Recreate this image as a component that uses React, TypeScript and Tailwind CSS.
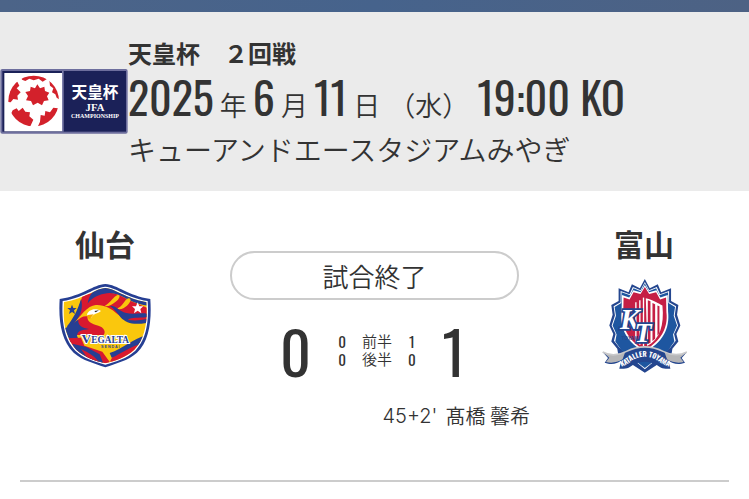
interface Team {
  name: string;
  score: number;
  halves: [number, number];
}

const home: Team = { name: "仙台", score: 0, halves: [0, 0] };
const away: Team = { name: "富山", score: 1, halves: [1, 0] };

function CupLogo() {
  return (
    <svg viewBox="0 28 384 194" className="w-32 shrink-0" role="img" aria-label="天皇杯 JFA">
      <defs>
        <clipPath id="cup-ball">
          <circle cx="101" cy="124" r="76" />
        </clipPath>
      </defs>
      <rect x="1" y="28" width="382" height="194" rx="6" fill="#6d6e9d" />
      <rect x="7" y="34" width="371" height="182" fill="#1b2158" />
      <rect x="13" y="40" width="173" height="175" fill="#fff" />
      <rect x="186" y="34" width="5" height="182" fill="#7c7eaa" />
      <g clipPath="url(#cup-ball)" fill="#d3212b">
        <path d="M112 74 L120 86 L133 81 L135 94 L148 99 L141 110 L146 122 L132 124 L126 137 L113 129 L99 137 L93 124 L78 122 L84 109 L76 97 L90 94 L92 81 L105 86 Z" />
        <path d="M60 44 L140 44 L142 57 L128 66 L116 57 L101 62 L88 57 L76 64 L66 60 Z" />
        <path d="M20 70 L52 66 L58 78 L50 86 L62 98 L52 108 L54 120 L40 118 L32 128 L20 126 Z" />
        <path d="M148 62 L182 90 L182 122 L170 114 L166 104 L156 98 L160 86 L150 78 Z" />
        <path d="M38 152 L50 146 L56 154 L68 144 L76 156 L90 158 L88 170 L100 180 L90 202 L60 200 L30 168 Z" />
        <path d="M122 166 L134 168 L136 154 L150 158 L160 144 L174 146 L168 172 L136 202 L112 204 L120 186 Z" />
      </g>
      <g fill="#fff" textAnchor="middle" className="font-['Noto_Sans_CJK_JP',sans-serif] font-bold">
        <text x="285" y="114" fontSize="47">天皇杯</text>
        <text x="285" y="154" fontSize="32" className="font-['Liberation_Serif',serif]">JFA</text>
        <text x="285" y="176" fontSize="18" className="font-['Liberation_Serif',serif]">CHAMPIONSHIP</text>
      </g>
    </svg>
  );
}

function SendaiCrest() {
  return (
    <svg viewBox="26 188 276 254" className="mt-1 w-[92px]" role="img" aria-label="ベガルタ仙台">
      <defs>
        <clipPath id="sendai-shield">
          <path d="M165 203 C198 206 224 234 288 245 C292 300 286 352 252 388 C226 412 196 420 165 429 C134 420 104 412 78 388 C44 352 36 300 41 245 C106 234 132 206 165 203 Z" />
        </clipPath>
      </defs>
      <path
        d="M165 191 C202 193 232 226 300 236 C304 300 298 360 260 397 C232 422 198 428 165 441 C132 428 98 422 70 397 C32 360 24 300 28 236 C98 226 128 193 165 191 Z"
        fill="#263f93"
      />
      <path
        d="M165 199 C200 202 228 232 292 242 C296 300 290 355 255 391 C228 416 198 423 165 433 C132 423 102 416 75 391 C40 355 34 300 37 242 C102 232 130 202 165 199 Z"
        fill="#fff"
      />
      <g clipPath="url(#sendai-shield)">
        <rect x="26" y="188" width="276" height="254" fill="#fac70d" />
        <path d="M96 228 C140 208 186 208 236 240 L290 262 L290 306 C244 308 222 298 202 282 C184 264 158 252 136 254 C112 256 90 286 66 316 C80 280 88 252 96 228 Z" fill="#d8192f" />
        <path d="M92 236 C98 258 94 280 78 300 C62 320 54 328 50 318 C70 292 82 270 92 236 Z" fill="#263f93" />
        <path d="M150 196 C202 202 240 234 292 246 L292 256 C262 252 244 244 226 234 C206 222 184 214 162 220 C140 224 120 236 112 250 C116 222 132 208 150 196 Z" fill="#263f93" />
        <path d="M164 256 C180 248 190 228 202 224 C212 222 208 236 196 244 C186 252 178 258 166 258 Z M202 264 C218 258 222 238 234 234 C246 234 240 248 230 256 C222 262 214 268 202 266 Z" fill="#fac70d" />
        <path d="M178 256 C200 256 204 272 228 278 C248 284 270 276 290 280 L290 290 C262 294 246 290 232 298 C252 302 270 300 290 296 L288 308 C250 314 228 310 210 290 C202 278 192 266 178 256 Z" fill="#263f93" />
        <path d="M78 304 C86 292 100 286 112 288 C108 302 124 312 144 316 C160 320 168 334 160 344 L72 344 C58 330 68 314 78 304 Z" fill="#d8192f" />
        <path d="M42 324 C60 318 70 306 84 298 C82 316 96 322 116 326 C94 330 82 330 80 346 L90 370 L60 366 Z" fill="#263f93" />
        <path d="M110 282 C118 264 140 264 152 272 C144 280 132 278 124 290 C120 296 114 292 110 282 Z" fill="#fff" />
        <path d="M112 284 L130 282 L118 297 C112 294 110 290 112 284 Z" fill="#f5a800" />
        <path d="M132 272 L146 270 L136 276 Z" fill="#222" />
        <path d="M48 354 L92 352 L102 376 L156 394 L182 430 L126 430 L70 388 Z" fill="#d8192f" />
        <path d="M66 370 L108 380 L148 402 L160 432 L110 416 L76 396 Z" fill="#263f93" />
        <path d="M92 386 C116 398 132 406 146 426 L112 414 Z" fill="#d8192f" />
        <path d="M178 434 C180 400 214 388 246 378 L274 354 L260 392 L214 420 Z" fill="#d8192f" />
        <path d="M178 398 C218 386 244 356 290 344 L276 370 C244 376 216 398 184 412 Z" fill="#263f93" />
      </g>
      <path d="M65 253 L69 263 L79 263 L71 270 L74 281 L65 275 L56 281 L59 270 L51 263 L61 263 Z" fill="#263f93" />
      <path d="M262 246 L267 258 L279 258 L270 266 L273 279 L262 271 L251 279 L254 266 L245 258 L257 258 Z" fill="#fff" />
      <text
        x="165"
        y="367"
        fontSize="28"
        textAnchor="middle"
        stroke="#fff"
        strokeWidth="6"
        paintOrder="stroke"
        fill="#263f93"
        className="font-['Liberation_Serif',serif] font-bold"
      >
        <tspan fontSize="40">V</tspan>EGALTA
      </text>
      <text x="180" y="382" fontSize="11" textAnchor="middle" fill="#263f93" className="font-['Liberation_Sans',sans-serif] font-bold">
        S E N D A I
      </text>
    </svg>
  );
}

function ToyamaCrest() {
  return (
    <svg viewBox="38 174 256 282" className="w-[85px]" role="img" aria-label="カターレ富山">
      <defs>
        <path id="toyama-ribbon" d="M90 440 Q112 434 128 420 Q167 396 206 420 Q222 434 246 440" />
      </defs>
      <path
        d="M167 174 L182 202 L206 190 L216 214 L246 202 L246 240 L268 252 L264 282 L274 314 L262 340 L268 362 L250 384 L244 420 L204 432 L167 456 L130 432 L90 420 L84 384 L66 362 L72 340 L60 314 L70 282 L66 252 L88 240 L88 202 L118 214 L128 190 L152 202 Z"
        fill="#24468f"
      />
      <path
        d="M167 183 L180 208 L203 198 L213 220 L240 210 L240 244 L261 256 L257 284 L267 314 L255 340 L260 360 L244 380 L167 446 L90 380 L74 360 L79 340 L67 314 L77 284 L73 256 L94 244 L94 210 L121 220 L131 198 L154 208 Z"
        fill="#fff"
      />
      <path
        d="M167 187 L179 211 L201 202 L211 223 L237 214 L238 246 L258 258 L254 285 L264 314 L252 341 L256 362 L238 388 L167 442 L96 388 L78 362 L82 341 L70 314 L80 285 L76 258 L96 246 L97 214 L123 223 L133 202 L155 211 Z"
        fill="#1e56a0"
      />
      <path d="M167 192 L180 214 L202 208 L214 230 L236 222 L237 272 C243 324 220 366 167 394 C114 366 91 324 97 272 L98 222 L120 230 L132 208 L154 214 Z" fill="#fff" />
      <path d="M167 198 L180 219 L201 214 L213 236 L231 230 L232 274 C238 322 214 362 167 388 C120 362 96 322 102 274 L103 230 L121 236 L133 214 L154 219 Z" fill="#c51f45" />
      <path d="M170 232 C196 238 208 248 220 254 C226 314 212 356 174 376 Z" fill="#fff" />
      <g fill="#c51f45">
        <path d="M176 238 L184 241 V366 L176 370 Z" />
        <path d="M190 246 L198 250 V354 L190 361 Z" />
        <path d="M205 254 L211 256 V336 L205 345 Z" />
      </g>
      <g fill="#fff">
        <rect x="138" y="244" width="4" height="120" />
        <rect x="150" y="238" width="4" height="134" />
        <rect x="161" y="230" width="4" height="146" />
      </g>
      <text x="97" y="358" fontSize="14" fill="#24468f" className="font-['Liberation_Sans',sans-serif] font-bold">TOYAMA</text>
      <g className="font-['Liberation_Serif',serif] font-bold italic" fill="#fff" stroke="#24468f" strokeWidth="10" paintOrder="stroke">
        <text x="92" y="326" fontSize="88">K</text>
        <text x="136" y="364" fontSize="84">T</text>
      </g>
      <path d="M40 394 C62 406 88 404 112 392 C148 374 186 374 222 392 C246 404 270 406 294 394 L278 412 L288 426 C266 434 250 428 238 420 L244 444 C222 446 212 440 202 432 C182 420 152 420 132 432 C122 440 112 446 90 444 L96 420 C84 428 68 434 46 426 L56 412 Z" fill="#24468f" />
      <path d="M40 394 C62 406 88 404 108 394 L100 416 C84 426 66 428 50 424 L60 411 Z M294 394 C272 406 246 404 226 394 L234 416 C250 426 268 428 284 424 L274 411 Z" fill="#b5b5b7" />
      <path d="M40 394 C62 406 88 404 112 392 C148 374 186 374 222 392 C246 404 270 406 294 394" fill="none" stroke="#c9c9cb" strokeWidth="5" />
      <text fontSize="21" fill="#fff" className="font-['Oswald',sans-serif] font-bold">
        <textPath href="#toyama-ribbon" startOffset="50%" textAnchor="middle">KATALLER TOYAMA</textPath>
      </text>
    </svg>
  );
}

function Num({ children }: { children: string }) {
  return <span className="font-['Oswald',sans-serif] text-[44px]/15 font-normal">{children}</span>;
}

function MatchHeader() {
  return (
    <header className="flex items-center bg-[#ebebeb]">
      <CupLogo />
      <div className="min-w-0 whitespace-nowrap pt-[27px] pb-5">
        <p className="text-2xl/7 font-bold">天皇杯　２回戦</p>
        <p className="flex h-15 items-baseline gap-1.5 text-[27px]/15 font-[350]">
          <Num>2025</Num>年<Num>6</Num>月<Num>11</Num>
          <span>日</span>
          <span className="px-0.5">（水）</span>
          <Num>19:00 KO</Num>
        </p>
        <p className="text-[28px]/11 font-[350]">キューアンドエースタジアムみやぎ</p>
      </div>
    </header>
  );
}

function TeamColumn({ team, children }: { team: Team; children: React.ReactNode }) {
  return (
    <div className="flex flex-col items-center gap-4">
      <h2 className="text-[30px]/10 font-bold">{team.name}</h2>
      {children}
    </div>
  );
}

export default function App() {
  return (
    <main className="bg-white font-['Noto_Sans_CJK_JP',sans-serif] text-[#333]">
      <div className="h-3 bg-linear-to-r from-[#4c6488] via-[#46638c] to-[#4d6284]" />
      <MatchHeader />

      <section className="grid grid-cols-[210px_1fr_210px] gap-x-5 pt-8">
        <TeamColumn team={home}>
          <SendaiCrest />
        </TeamColumn>

        <div className="pt-7">
          <p className="rounded-full border-2 border-[#ccc] text-center text-[26px]/[45px] font-[350]">試合終了</p>
          <div className="flex items-center justify-center pt-1.5 pr-1">
            <span className="w-[55px] font-['Oswald',sans-serif] text-[60px]/22">{home.score}</span>
            <table className="w-[84px] text-center text-[15px]/[18px]">
              <tbody>
                {["前半", "後半"].map((label, i) => (
                  <tr key={label}>
                    <td className="font-['Oswald',sans-serif]">{home.halves[i]}</td>
                    <th className="font-[350]">{label}</th>
                    <td className="font-['Oswald',sans-serif]">{away.halves[i]}</td>
                  </tr>
                ))}
              </tbody>
            </table>
            <span className="w-[46px] text-right font-['Oswald',sans-serif] text-[60px]/22">{away.score}</span>
          </div>
        </div>

        <TeamColumn team={away}>
          <ToyamaCrest />
        </TeamColumn>
      </section>

      <section className="grid grid-cols-2 pt-1.5">
        <p className="col-start-2 flex gap-2 pl-2 text-xl/8 font-[350]">
          <span className="font-['Inter',sans-serif] font-light">45+2'</span>
          <span>髙橋 馨希</span>
        </p>
      </section>

      <hr className="mx-5 mt-12 border-t-2 border-[#ccc]" />
    </main>
  );
}
